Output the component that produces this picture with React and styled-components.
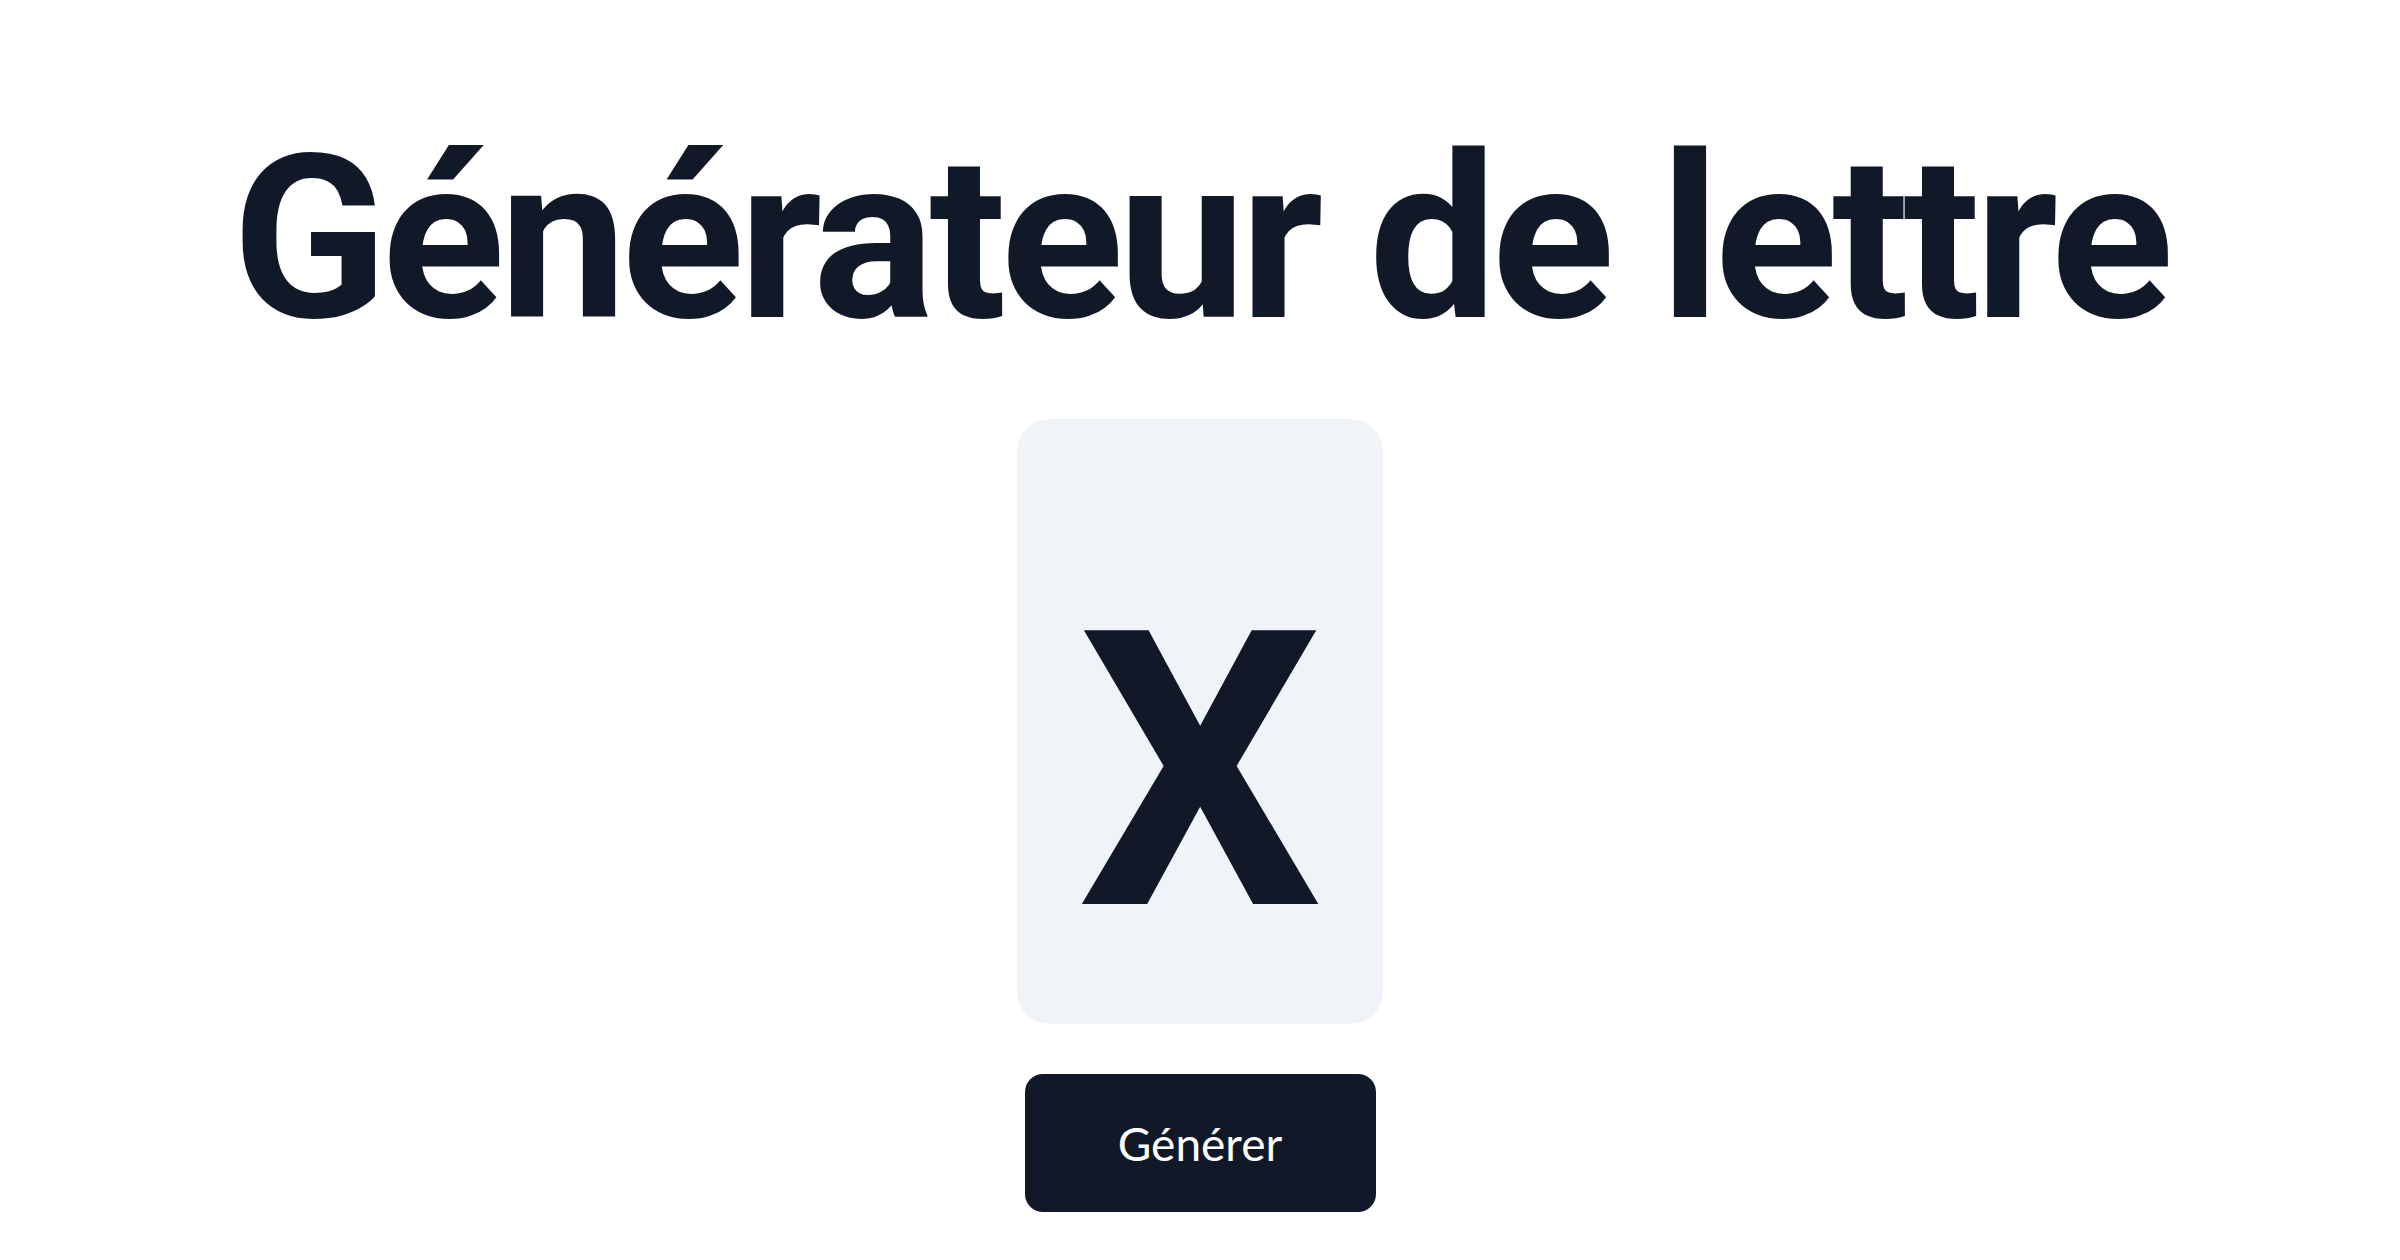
import React, { useState } from "react"
import styled, { createGlobalStyle } from "styled-components"

const GlobalStyle = createGlobalStyle`
  html, body {
    margin: 0;
    padding: 0;
    background: #ffffff;
  }
`

const Page = styled.main`
  display: flex;
  flex-direction: column;
  align-items: center;
  padding-top: 125px;
  color: #111827;
`

const Title = styled.h1`
  margin: 0;
  font-family: Roboto, "Liberation Sans", sans-serif;
  font-weight: 700;
  font-size: 228px;
  line-height: 1;
  letter-spacing: -0.025em;
  color: #111827;
`

const Card = styled.div`
  display: flex;
  justify-content: center;
  width: 366px;
  margin-top: 66px;
  padding: 161px 0 59px;
  border-radius: 32px;
  background-color: #f0f4f8;
`

const Letter = styled.span`
  font-family: Roboto, "Liberation Sans", sans-serif;
  font-weight: 700;
  font-size: 385px;
  line-height: 1;
  color: #111827;
`

const Button = styled.button`
  display: flex;
  align-items: center;
  justify-content: center;
  width: 351px;
  height: 138px;
  margin-top: 50px;
  border: none;
  border-radius: 18px;
  background-color: #111827;
  color: #ffffff;
  font-family: Lato, "Open Sans", sans-serif;
  font-size: 46px;
  cursor: pointer;
`

const LETTERS = "ABCDEFGHIJKLMNOPQRSTUVWXYZ"

export default function App() {
  const [letter, setLetter] = useState("X")

  const generate = () => {
    setLetter(LETTERS[Math.floor(Math.random() * LETTERS.length)])
  }

  return (
    <>
      <GlobalStyle />
      <Page>
        <Title>Générateur de lettre</Title>
        <Card>
          <Letter>{letter}</Letter>
        </Card>
        <Button onClick={generate}>Générer</Button>
      </Page>
    </>
  )
}
